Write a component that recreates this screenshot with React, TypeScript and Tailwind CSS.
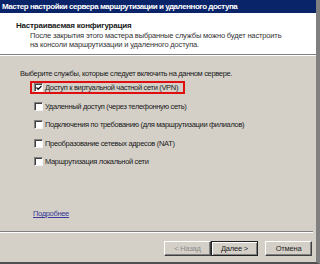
import React from "react";

const services = [
  { label: "Доступ к виртуальной частной сети (VPN)", checked: true },
  { label: "Удаленный доступ (через телефонную сеть)", checked: false },
  { label: "Подключения по требованию (для маршрутизации филиалов)", checked: false },
  { label: "Преобразование сетевых адресов (NAT)", checked: false },
  { label: "Маршрутизация локальной сети", checked: false },
];

function CheckBox({ checked }: { checked: boolean }) {
  return (
    <span className="flex h-[9px] w-[9px] shrink-0 items-center justify-center border border-t-[#808080] border-l-[#808080] border-r-[#f4f4f4] border-b-[#f4f4f4] bg-white shadow-[inset_1px_1px_0_#404040]">
      {checked && (
        <svg width="6" height="6" viewBox="0 0 6 6">
          <path d="M0.5 2.5 L2.2 4.3 L5.5 1" stroke="#111" strokeWidth="1.3" fill="none" />
        </svg>
      )}
    </span>
  );
}

function Button({ children, def = false, disabled = false }: { children: React.ReactNode; def?: boolean; disabled?: boolean }) {
  return (
    <button
      type="button"
      className={
        "flex h-[15px] w-[47px] items-center justify-center bg-[#d4d0c8] text-[7.5px] tracking-[-0.2px] " +
        (def
          ? "border border-[#222] shadow-[inset_1px_1px_0_#fff,inset_-1px_-1px_0_#808080]"
          : "border border-t-[#fff] border-l-[#fff] border-r-[#404040] border-b-[#404040] shadow-[inset_-1px_-1px_0_#808080]") +
        (disabled ? " text-[#8a8a8a]" : " text-[#222]")
      }
    >
      {children}
    </button>
  );
}

export default function App() {
  return (
    <div
      className="flex h-[264px] w-[320px] flex-col overflow-hidden bg-[#d4d0c8] text-[#1a1a1a]"
      style={{ fontFamily: '"Liberation Sans", Arial, sans-serif' }}
    >
      <div className="flex flex-1 flex-col border-r-[4px] border-b-[2px] border-r-[#808080] border-b-[#505050]">
        {/* Заголовок окна */}
        <div className="flex h-[13px] items-center bg-[#0a246a] pl-[2px] text-[8px] font-bold tracking-[-0.45px] text-white">
          Мастер настройки сервера маршрутизации и удаленного доступа
        </div>

        {/* Шапка мастера */}
        <div className="h-[41px] bg-white pl-[16px] pt-[8px]">
          <p className="text-[8px] leading-[9px] font-bold tracking-[-0.2px]">Настраиваемая конфигурация</p>
          <div className="mt-[1px] pl-[14px] text-[7.5px] leading-[9px] tracking-[-0.15px] text-[#333]">
            <p>После закрытия этого мастера выбранные службы можно будет настроить</p>
            <p>на консоли маршрутизации и удаленного доступа.</p>
          </div>
        </div>
        <div className="h-[1px] bg-[#808080]" />
        <div className="h-[1px] bg-white" />

        {/* Содержимое */}
        <div className="flex flex-1 flex-col pl-[20px] pt-[13px] text-[7.5px] tracking-[-0.33px]">
          <p className="leading-[9px]">Выберите службы, которые следует включить на данном сервере.</p>
          <div className="mt-[3px] flex flex-col gap-[5.5px]">
            {services.map((s, i) => (
              <div
                key={s.label}
                className={
                  "ml-[10px] flex h-[13px] items-center gap-[2px] border-2 pl-[2px] " +
                  (i === 0 ? "w-[155px] border-[#e01010]" : "border-transparent")
                }
              >
                <CheckBox checked={s.checked} />
                <span className="leading-[9px]">{s.label}</span>
              </div>
            ))}
          </div>
          <a className="mt-[41px] ml-[13px] w-fit leading-[9px] text-[#3a3a9a] underline">Подробнее</a>
        </div>

        {/* Кнопки */}
        <div className="mr-[3px] h-[1px] bg-[#808080]" />
        <div className="mr-[3px] h-[1px] bg-white" />
        <div className="flex h-[29px] items-start justify-end pt-[8px] pr-[4px]">
          <Button disabled>&lt; Назад</Button>
          <Button def>
            <span>
              <span className="underline">Д</span>алее &gt;
            </span>
          </Button>
          <span className="w-[7px]" />
          <Button>Отмена</Button>
        </div>
      </div>
    </div>
  );
}
